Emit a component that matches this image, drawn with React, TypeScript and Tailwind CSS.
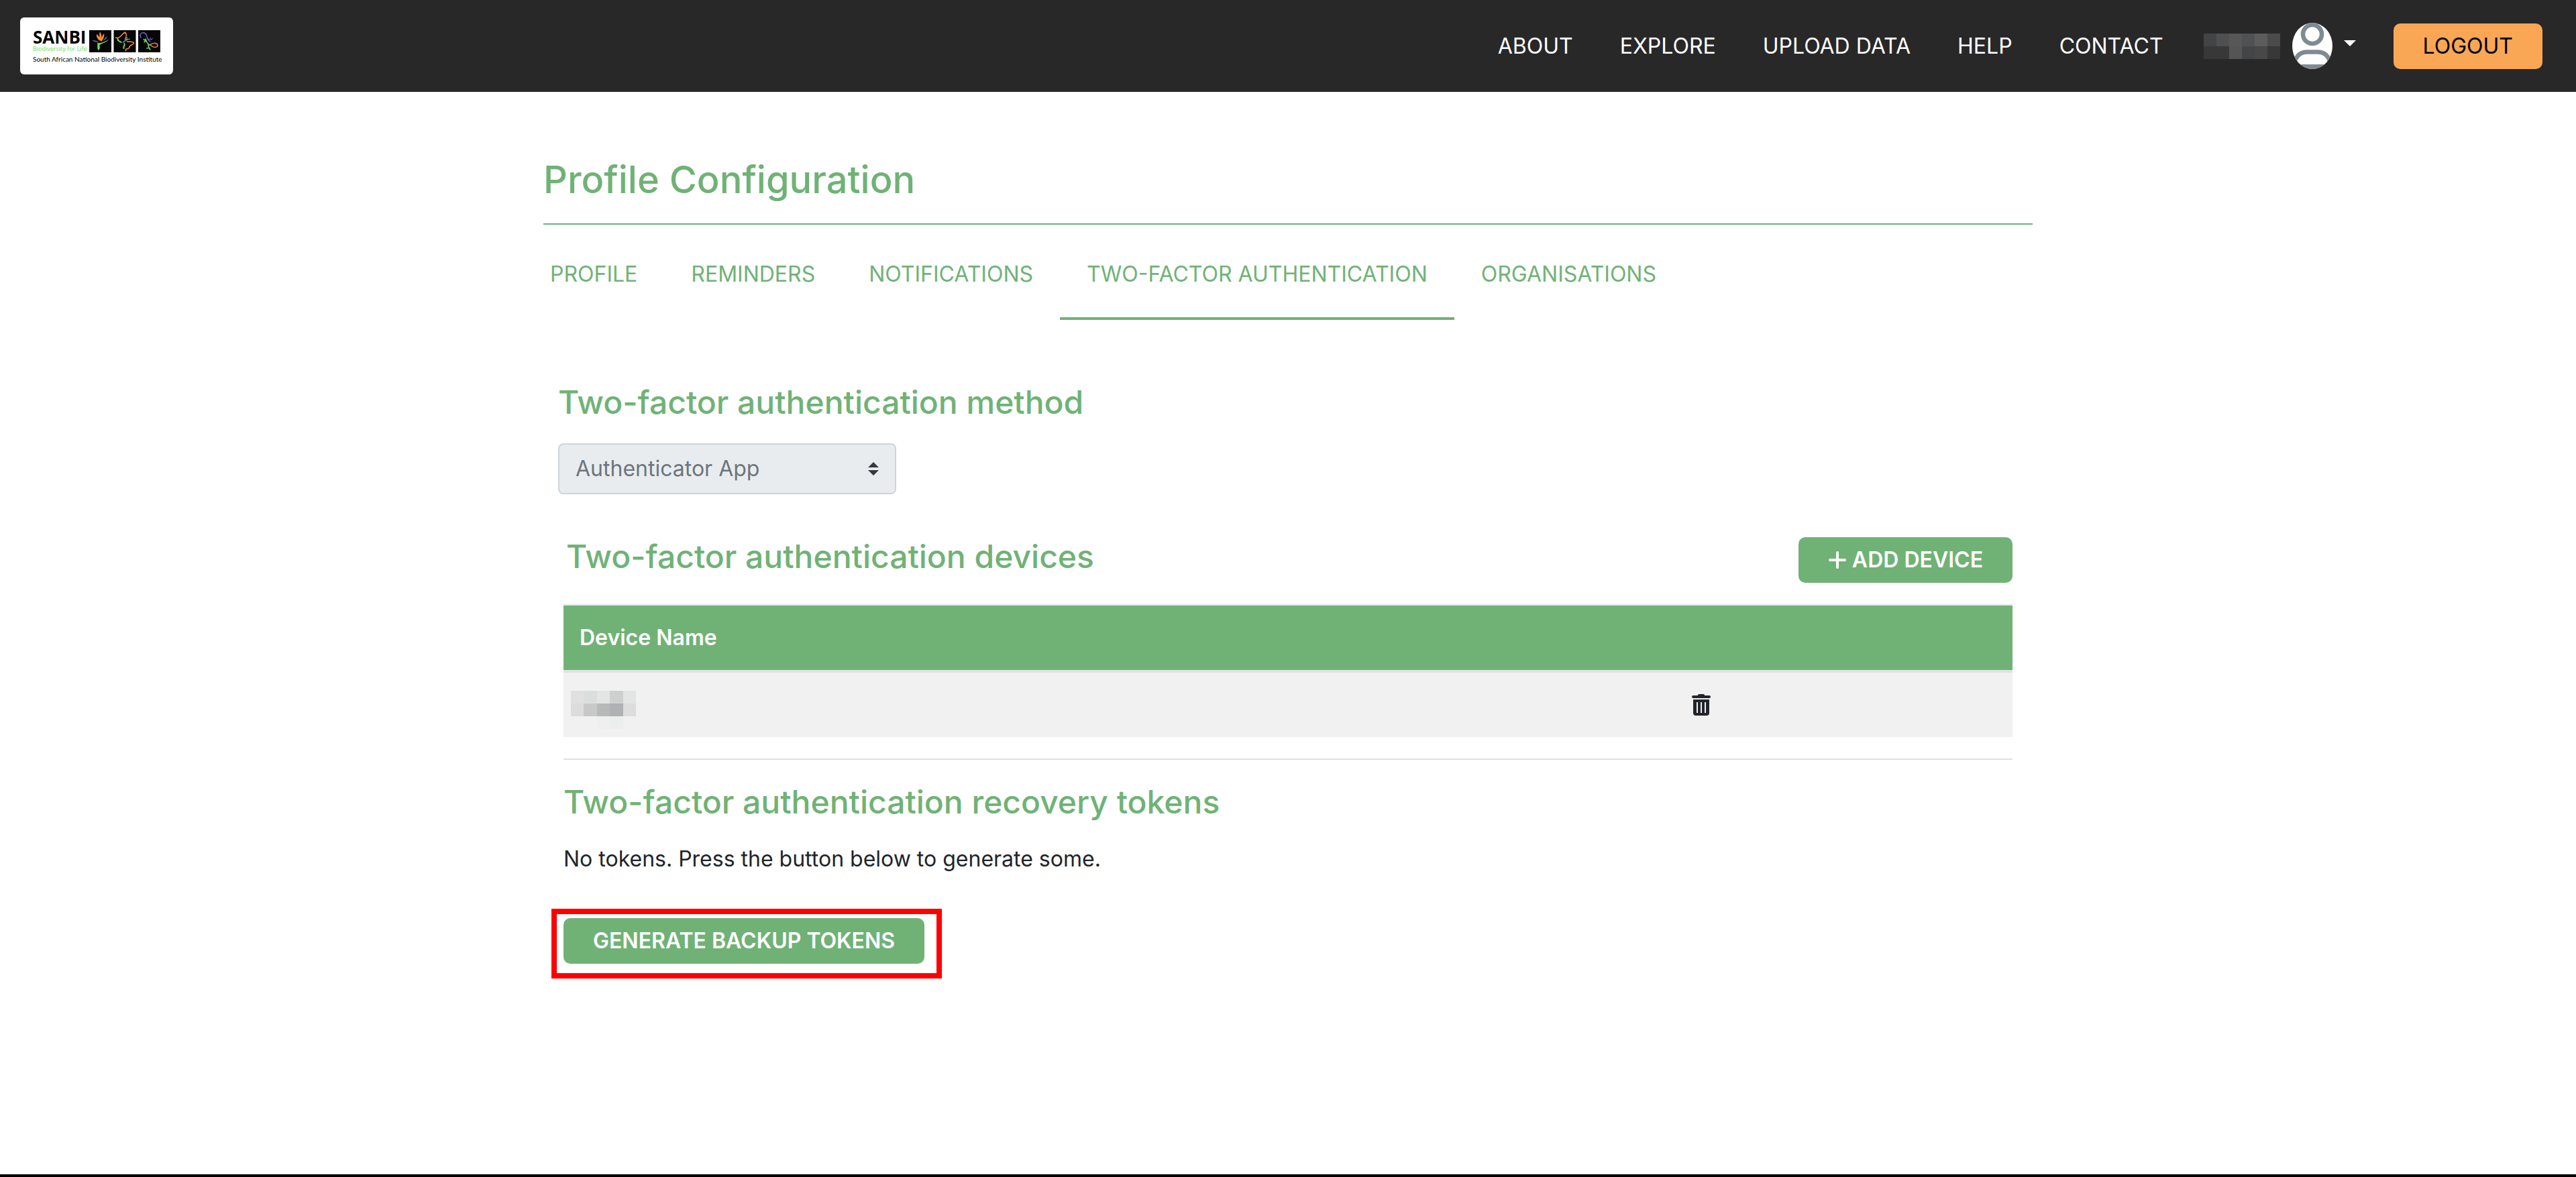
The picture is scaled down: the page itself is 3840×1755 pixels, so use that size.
import React from "react";

const navLinks = ["About", "Explore", "Upload data", "Help", "Contact"];
const tabs = ["Profile", "Reminders", "Notifications", "Two-factor authentication", "Organisations"];

function Logo() {
  return (
    <a href="#home" aria-label="SANBI home" className="flex h-[85px] w-[228px] flex-col rounded-md bg-white pt-[19px] pl-[19px] text-black">
      <span className="flex h-[34px] gap-[5px]">
        <span className="flex w-[79px] flex-col font-['Open_Sans',sans-serif]">
          <span className="h-[24px] text-[26px] leading-[21px] font-bold">SANBI</span>
          <span className="text-[9px] leading-[12px] whitespace-nowrap text-[#6be05a]">Biodiversity for Life</span>
        </span>
        <svg width="106" height="33" viewBox="0 0 106 33" fill="none" strokeLinecap="round" strokeLinejoin="round">
          <rect width="33" height="33" fill="#050607" />
          <rect x="36.500" width="33" height="33" fill="#050607" />
          <rect x="73" width="33" height="33" fill="#050607" />
          <g>
            <path d="M18 17C15 13 14.500 7 16 2C19 7 19 12 18 17ZM17 16C14 15 10 11 11 6C14 8 17 12 17 16ZM18 17C18 12 19 8 22 5C23 9 21 14 18 17Z" fill="#f58a33" />
            <path d="M4 15C8 15 12 16 15 18C10 18 7 17 4 15ZM21 16C22 13 24 11 27 9C26 12 24 14 21 16Z" fill="#7263c9" />
            <path d="M29 14C25 19 18 19 15 23C17 26 15 29 14 30C11 28 13 23 12 19C18 20 23 17 29 14Z" fill="#6be05a" />
          </g>
          <g transform="translate(36.500 0)" strokeWidth="1.500">
            <path d="M3 11C9 14 12 5 17 3C20 6 19 10 17 14M20 17C24 18 28 16 30 19C29 23 24 21 23 26C22 29 17 26 18 31" stroke="#f58a33" />
            <path d="M6 13C6 17 9 16 11 18M16 20C17 24 14 23 15 27" stroke="#6be05a" strokeWidth="2" />
            <path d="M14 18L20 14" stroke="#7263c9" strokeWidth="2" />
            <path d="M19 14L20 11M20 14L24 13" stroke="#6be05a" strokeWidth="1" />
          </g>
          <g transform="translate(73 0)" strokeWidth="1.500">
            <path d="M4 11C1 6 5 3 9 4C15 6 11 13 18 17" stroke="#7263c9" />
            <path d="M14 13L20 14M18 11L20 14L22 12" stroke="#7263c9" strokeWidth="1" />
            <path d="M17 22C21 19 27 18 29 22C30 25 24 28 18 22" stroke="#f58a33" />
            <path d="M11 13C12 17 13 20 17 22M8 14L11 15L9 18M15 22L16 27M13 27L16 26L18 29" stroke="#6be05a" />
          </g>
        </svg>
      </span>
      <span className="text-[10px] leading-[18px] whitespace-nowrap font-['Lato',sans-serif]">South African National Biodiversity Institute</span>
    </a>
  );
}

function Mosaic({ cells, columns }: { cells: string[]; columns: string }) {
  return (
    <span aria-hidden="true" className={"grid " + columns}>
      {cells.map((c, i) => (
        <span key={i} className={"h-[19px] " + c} />
      ))}
    </span>
  );
}

const userCells = [
  "bg-[#434446]", "bg-[#505050]", "bg-[#575757]", "bg-[#505153]", "bg-[#5c5c5c]", "bg-[#4b4b4b]",
  "bg-[#383838]", "bg-[#383838]", "bg-[#555555]", "bg-[#444547]", "bg-[#484848]", "bg-[#383838]",
];
const deviceCells = [
  "bg-[#e0e0e0]", "bg-[#dcdedd]", "bg-[#e4e4e4]", "bg-[#ced0cf]", "bg-[#e3e5e4]",
  "bg-[#dcdcdc]", "bg-[#c8c8c8]", "bg-[#b7b9b8]", "bg-[#afb1b3]", "bg-[#dddddd]",
  "bg-[#f1f1f1]", "bg-[#f1f1f1]", "bg-[#efefef]", "bg-[#eaeeec]", "bg-[#f1f1f1]",
];

const heading = "text-[48px] leading-[58px] font-medium";
const button = "flex h-[68px] items-center rounded-[10px] px-11 uppercase";

export default function App() {
  return (
    <div className="flex min-h-screen flex-col bg-white font-['Inter',sans-serif] text-[32px] leading-[48px] text-[#212529]">
      <header className="flex h-[137px] items-center justify-between bg-[#282828] pr-[50px] pl-[30px]">
        <Logo />
        <div className="flex items-center text-white">
          <nav className="flex gap-[70px] uppercase">
            {navLinks.map((l) => (
              <a key={l} href="#nav">{l}</a>
            ))}
          </nav>
          <button aria-label="Account menu" className="ml-[60px] flex items-center">
            <Mosaic cells={userCells} columns="w-[114px] grid-cols-6" />
            <svg className="ml-[18px]" width="60" height="69" viewBox="0 0 60 69" fill="none">
              <clipPath id="avatar"><ellipse cx="30" cy="34.500" rx="30" ry="34.500" /></clipPath>
              <g clipPath="url(#avatar)">
                <rect width="60" height="69" fill="#fff" />
                <circle cx="30" cy="17" r="14" stroke="#808a91" strokeWidth="6.500" />
                <path d="M3 60C6 49 13 43.500 22 43.500H38C47 43.500 54 49 57 60" stroke="#808a91" strokeWidth="6.500" />
                <rect y="62" width="60" height="7" fill="#808a91" />
              </g>
            </svg>
            <svg className="mb-2 ml-[17px]" width="18" height="9" viewBox="0 0 18 9"><path d="M0 0H18L9 9Z" fill="#fff" /></svg>
          </button>
          <button className={button + " ml-14 bg-[#f9a755] text-black"}>Logout</button>
        </div>
      </header>

      <main className="mx-auto w-full max-w-[2280px] grow pt-[98px]">
        <h1 className="mx-[30px] border-b-2 border-[#70b276] pb-[31px] text-[56px] leading-[67px] font-medium text-[#70b276]">
          Profile Configuration
        </h1>
        <nav className="flex pt-[10px] uppercase text-[#70b276]">
          {tabs.map((t, i) => (
            <a
              key={t}
              href="#tab"
              aria-current={i === 3 ? "page" : undefined}
              className={"border-b-4 px-10 pt-10 pb-10 " + (i === 3 ? "border-[#70b276]" : "border-transparent")}
            >
              {t}
            </a>
          ))}
        </nav>

        <section className="mt-[94px] px-[52px]">
          <h2 className={heading + " text-[#70b276]"}>
            <label htmlFor="method">Two-factor authentication method</label>
          </h2>
          <div className="relative mt-8 w-[504px]">
            <select
              id="method"
              disabled
              className="block w-full appearance-none rounded-lg border-2 border-[#ced4da] bg-[#e9ecef] px-6 py-3 text-[#6c757d] opacity-100"
            >
              <option>Authenticator App</option>
            </select>
            <svg className="pointer-events-none absolute top-7 right-[26px]" width="16" height="20" viewBox="0 0 16 20">
              <path d="M0 8L8 0L16 8ZM0 12H16L8 20Z" fill="#343a40" />
            </svg>
          </div>
        </section>

        <section className="mt-16 px-[60px]">
          <div className="flex items-start justify-between">
            <h2 className={heading + " pl-1 text-[#70b276]"}>Two-factor authentication devices</h2>
            <button className={button + " gap-2 bg-[#70b276] font-semibold text-white"}>
              <svg width="28" height="28" viewBox="0 0 28 28"><path d="M14 3V25M3 14H25" stroke="#fff" strokeWidth="4" strokeLinecap="round" /></svg>
              Add device
            </button>
          </div>
          <table className="mt-8 w-full border-separate border-spacing-0 text-left">
            <thead>
              <tr className="h-[102px] text-white">
                <th className="w-[1658px] border-t-2 border-b-4 border-[#dee2e6] bg-[#70b276] bg-clip-padding px-6 font-semibold">Device Name</th>
                <th aria-label="Actions" className="border-t-2 border-b-4 border-[#dee2e6] bg-[#70b276] bg-clip-padding" />
              </tr>
            </thead>
            <tbody>
              <tr className="h-24 bg-[#f1f1f1]">
                <td className="pt-[14px] pl-[11px]"><Mosaic cells={deviceCells} columns="w-[97px] grid-cols-5" /></td>
                <td className="pl-6">
                  <button aria-label="Delete device" className="block">
                    <svg width="28" height="32" viewBox="0 0 28 32" fill="none">
                      <path d="M2 4H26" stroke="#212529" strokeWidth="4" strokeLinecap="round" />
                      <path d="M8 3L10 0H18L20 3Z" fill="#212529" />
                      <path d="M2 8H26V28Q26 32 22 32H6Q2 32 2 28Z" fill="#212529" />
                      <path d="M8 12V28M14 12V28M20 12V28" stroke="#f1f1f1" strokeWidth="2" />
                    </svg>
                  </button>
                </td>
              </tr>
            </tbody>
          </table>
          <hr className="mt-8 border-t-2 border-[#dee2e6]" />
        </section>

        <section className="mt-[34px] px-[60px]">
          <h2 className={heading + " text-[#70b276]"}>Two-factor authentication recovery tokens</h2>
          <p className="mt-8">No tokens. Press the button below to generate some.</p>
          <div className="relative mt-16 w-fit">
            <button className={button + " bg-[#70b276] font-semibold text-white"}>Generate backup tokens</button>
            <span aria-hidden="true" className="pointer-events-none absolute -top-[14px] -right-[26px] -bottom-[22px] -left-[18px] border-8 border-[#ff0000]" />
          </div>
        </section>
      </main>
      <footer className="h-1 bg-black" />
    </div>
  );
}
